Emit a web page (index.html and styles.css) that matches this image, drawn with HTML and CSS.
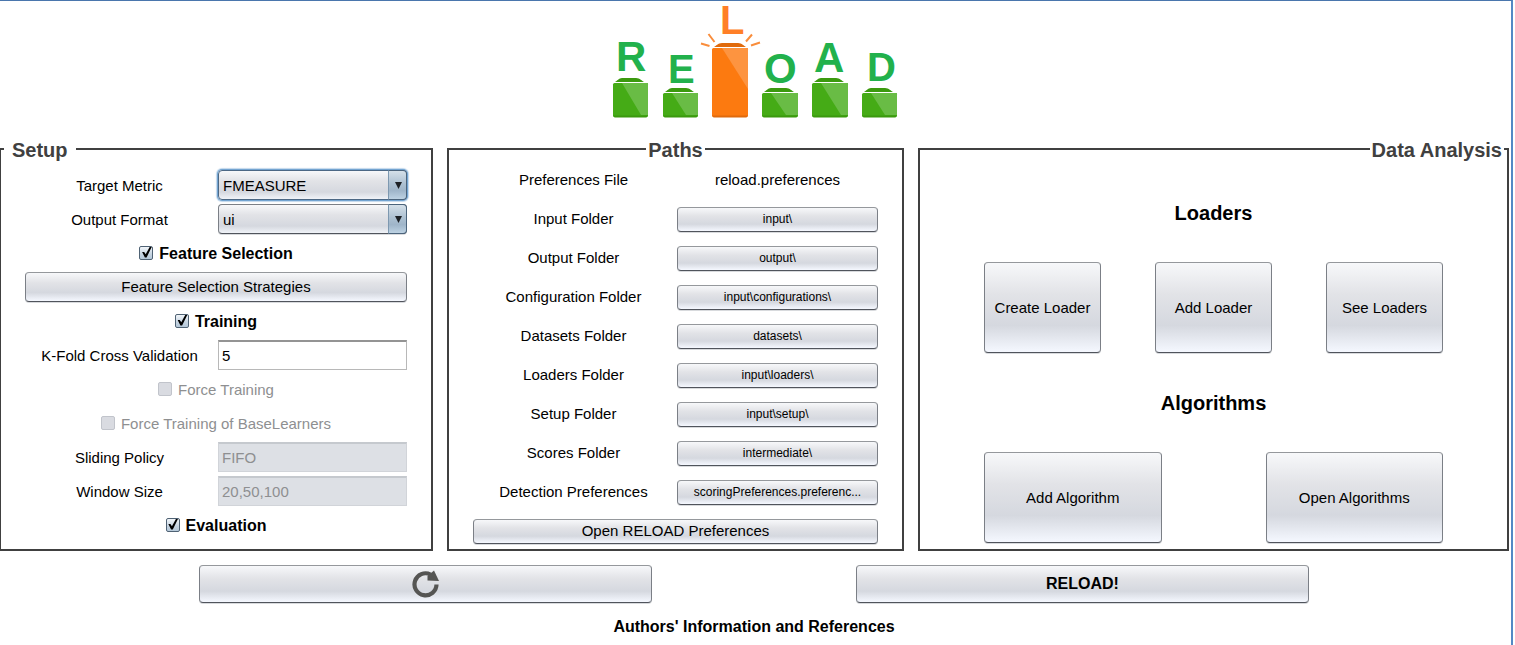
FILE: index.html
```html
<!DOCTYPE html>
<html lang="en">
<head>
<meta charset="utf-8">
<title>RELOAD</title>
<link rel="stylesheet" href="styles.css">
</head>
<body>
<div class="window">
  <header class="header">
    <svg class="logo" viewBox="0 0 290 120" role="img" aria-label="RELOAD">
      <g class="logo-letters">
        <text class="tall" x="6" y="69">R</text>
        <text x="58" y="81">E</text>
        <text class="accent" x="110" y="32">L</text>
        <text class="tall" x="154" y="81">O</text>
        <text class="tall" x="204" y="70">A</text>
        <text x="257" y="79">D</text>
      </g>
      <g class="rays">
        <path d="M91 41.500l8.500 2.500M98.500 32l6 8M136 39.500l6-7M141 43.500l9-3"/>
      </g>
      <g>
        <path fill="#3b990e" d="M5 80c2-1 4-4 7-4h14c4 0 6 3 8 4z"/>
        <rect fill="#45ab16" x="3" y="81" width="35" height="34" rx="1.500"/>
        <path fill="#69bc45" d="M12 81h26v32l-7 0z"/>
        <path fill="#3b990e" d="M3 113.500h35l-1.500 2h-32z"/>
      </g>
      <g>
        <path fill="#3b990e" d="M55 90c2-1 4-4 7-4h14c4 0 6 3 8 4z"/>
        <rect fill="#45ab16" x="53" y="91" width="35" height="24" rx="1.500"/>
        <path fill="#69bc45" d="M62 91h26v22h-12z"/>
        <path fill="#3b990e" d="M53 113.500h35l-1.500 2h-32z"/>
      </g>
      <g>
        <path fill="#e06a0c" d="M104 45c2-1 4-4 8-4h16c4 0 6 3 8 4z"/>
        <rect fill="#fc7a10" x="102" y="46" width="36" height="69" rx="1.500"/>
        <path fill="#fd9440" d="M112 46h26v41z"/>
        <path fill="#e06a0c" d="M102 113.500h36l-1.500 2h-33z"/>
      </g>
      <g>
        <path fill="#3b990e" d="M154 90c2-1 4-4 7-4h15c4 0 6 3 8 4z"/>
        <rect fill="#45ab16" x="152" y="91" width="36" height="24" rx="1.500"/>
        <path fill="#69bc45" d="M161 91h27v22h-12z"/>
        <path fill="#3b990e" d="M152 113.500h36l-1.500 2h-33z"/>
      </g>
      <g>
        <path fill="#3b990e" d="M204 80c2-1 4-4 7-4h15c4 0 6 3 8 4z"/>
        <rect fill="#45ab16" x="202" y="81" width="36" height="34" rx="1.500"/>
        <path fill="#69bc45" d="M211 81h27v32h-7z"/>
        <path fill="#3b990e" d="M202 113.500h36l-1.500 2h-33z"/>
      </g>
      <g>
        <path fill="#3b990e" d="M254 90c2-1 4-4 7-4h14c4 0 6 3 8 4z"/>
        <rect fill="#45ab16" x="252" y="91" width="35" height="24" rx="1.500"/>
        <path fill="#69bc45" d="M261 91h26v22h-12z"/>
        <path fill="#3b990e" d="M252 113.500h35l-1.500 2h-32z"/>
      </g>
    </svg>
  </header>

  <main class="panels">
    <fieldset class="panel panel-setup">
      <legend>Setup</legend>
      <div class="setup-grid">
        <label for="metric">Target Metric</label>
        <span class="combo combo-active"><select id="metric"><option>FMEASURE</option></select></span>
        <label for="format">Output Format</label>
        <span class="combo"><select id="format"><option>ui</option></select></span>
        <label class="check strong wide"><input type="checkbox" checked>Feature Selection</label>
        <button class="btn wide" type="button">Feature Selection Strategies</button>
        <label class="check strong wide"><input type="checkbox" checked>Training</label>
        <label for="kfold">K-Fold Cross Validation</label>
        <input class="field" id="kfold" type="text" value="5">
        <label class="check off wide"><input type="checkbox" disabled>Force Training</label>
        <label class="check off wide"><input type="checkbox" disabled>Force Training of BaseLearners</label>
        <label for="policy">Sliding Policy</label>
        <input class="field" id="policy" type="text" value="FIFO" disabled>
        <label for="window-size">Window Size</label>
        <input class="field" id="window-size" type="text" value="20,50,100" disabled>
        <label class="check strong wide"><input type="checkbox" checked>Evaluation</label>
      </div>
    </fieldset>

    <fieldset class="panel panel-paths">
      <legend>Paths</legend>
      <div class="paths-grid">
        <span>Preferences File</span><span>reload.preferences</span>
        <label for="p-input">Input Folder</label><button class="btn small" id="p-input" type="button">input\</button>
        <label for="p-output">Output Folder</label><button class="btn small" id="p-output" type="button">output\</button>
        <label for="p-conf">Configuration Folder</label><button class="btn small" id="p-conf" type="button">input\configurations\</button>
        <label for="p-data">Datasets Folder</label><button class="btn small" id="p-data" type="button">datasets\</button>
        <label for="p-load">Loaders Folder</label><button class="btn small" id="p-load" type="button">input\loaders\</button>
        <label for="p-setup">Setup Folder</label><button class="btn small" id="p-setup" type="button">input\setup\</button>
        <label for="p-scores">Scores Folder</label><button class="btn small" id="p-scores" type="button">intermediate\</button>
        <label for="p-det">Detection Preferences</label><button class="btn small" id="p-det" type="button">scoringPreferences.preferenc...</button>
        <button class="btn wide" type="button">Open RELOAD Preferences</button>
      </div>
    </fieldset>

    <fieldset class="panel panel-data">
      <legend>Data Analysis</legend>
      <div class="data-grid">
        <h2>Loaders</h2>
        <div class="tiles loaders">
          <button class="btn" type="button">Create Loader</button>
          <button class="btn" type="button">Add Loader</button>
          <button class="btn" type="button">See Loaders</button>
        </div>
        <h2>Algorithms</h2>
        <div class="tiles algorithms">
          <button class="btn" type="button">Add Algorithm</button>
          <button class="btn" type="button">Open Algorithms</button>
        </div>
      </div>
    </fieldset>
  </main>

  <div class="actions">
    <button class="btn" type="button" aria-label="Refresh">
      <svg class="refresh" viewBox="0 0 28 28" aria-hidden="true">
        <path d="M24.500 14.500A11 11 0 1 1 18.500 4.500" fill="none" stroke="#555553" stroke-width="4.200"/>
        <path d="M22 0.500 27 11 15.500 10.500 15.500 6z" fill="#555553"/>
      </svg>
    </button>
    <button class="btn run" type="button">RELOAD!</button>
  </div>

  <footer class="footer">Authors' Information and References</footer>
</div>
</body>
</html>
```

FILE: styles.css
```css
* {
  box-sizing: border-box;
}

body {
  margin: 0 2px 0 0;
  background: #fff;
  color: #000;
  font: 15px/20px "Liberation Sans", Arial, sans-serif;
}

button,
input,
select {
  font: inherit;
  color: inherit;
  margin: 0;
}

.window {
  min-height: 100vh;
  border-top: 1px solid #4a76ad;
  border-right: 2px solid #5488c4;
}

/* Logo */
.header {
  display: flex;
  justify-content: center;
  padding: 1px 2px 15px 0;
}

.logo {
  width: 290px;
  height: 120px;
  overflow: visible;
}

.logo-letters {
  font-size: 40px;
  font-weight: bold;
  fill: #22b14c;
}

.logo-letters .tall {
  font-size: 42px;
}

.logo-letters .accent {
  fill: #ff7f27;
}

.rays {
  fill: none;
  stroke: #f98d3c;
  stroke-width: 2;
}

/* Panels */
.panels {
  display: grid;
  grid-template-columns: 433fr 457fr 591fr;
  gap: 14px;
  padding-right: 2px;
}

.panel {
  min-width: 0;
  margin: 0;
  padding: 0;
  border: 2px solid #404040;
}

.panel legend {
  padding: 2px 2px 0;
  color: #404040;
  font-size: 20px;
  font-weight: bold;
  line-height: 22px;
}

.panel-setup {
  border-left-width: 1px;
}

.panel-setup legend {
  margin-left: 3px;
  padding: 2px 8px 0;
}

.panel-paths legend {
  margin: 0 auto;
}

.panel-data legend {
  margin-left: auto;
  margin-right: 3px;
}

.setup-grid {
  display: grid;
  grid-template-columns: 1fr 1fr;
  grid-auto-rows: 30px;
  gap: 4px;
  padding: 9px 24px 8px;
  align-items: center;
  text-align: center;
}

.setup-grid label {
  padding-top: 2px;
}

.paths-grid {
  display: grid;
  grid-template-columns: 1fr 1fr;
  grid-auto-rows: 26px;
  gap: 13px 3px;
  padding: 6px 24px 5px;
  align-items: center;
  text-align: center;
}

.data-grid {
  display: grid;
  grid-auto-rows: 91px;
  gap: 4px;
  padding: 6px 64px 5px;
}

.data-grid h2 {
  margin: 0;
  align-self: center;
  text-align: center;
  font-size: 20px;
  line-height: 24px;
}

.tiles {
  display: grid;
}

.loaders {
  grid-template-columns: repeat(3, 1fr);
  gap: 54px;
}

.algorithms {
  grid-template-columns: repeat(2, 1fr);
  gap: 104px;
}

.wide {
  grid-column: 1 / -1;
}

/* Controls */
.btn {
  width: 100%;
  height: 100%;
  padding: 0 8px;
  border: 1px solid #7b7f86;
  border-top-color: #95989c;
  border-bottom-color: #50545c;
  border-radius: 4px;
  background: linear-gradient(#f7f8fa, #e2e3e7 35%, #d5d8df 70%, #f5f8ff);
  box-shadow: 0 1px 0 #d8dadd;
  white-space: nowrap;
  overflow: hidden;
}

.paths-grid .btn {
  height: 25px;
}

.small {
  font-size: 12px;
}

.combo {
  position: relative;
  display: block;
  height: 30px;
}

.combo select {
  appearance: none;
  width: 100%;
  height: 100%;
  padding: 2px 24px 0 4px;
  border: 1px solid #7b7f86;
  border-bottom-color: #50545c;
  border-radius: 4px;
  background: linear-gradient(#f7f8fa, #e2e3e7 35%, #d5d8df 75%, #f0f3f8);
  box-shadow: 0 1px 0 #d8dadd;
}

.combo-active select {
  border-color: #4c6885;
  box-shadow: 0 0 0 1px #73a4d1, 0 0 1px 2px #c2d8ec;
}

.combo::before {
  content: "";
  position: absolute;
  inset: 0 0 0 auto;
  width: 17px;
  border: 1px solid #4b647c;
  border-left-color: #7d98b0;
  border-radius: 0 4px 4px 0;
  background: linear-gradient(#d5e0e9, #adc1d2 45%, #9fb5c9 70%, #bdd2e3);
  pointer-events: none;
}

.combo::after {
  content: "";
  position: absolute;
  right: 5px;
  top: 12px;
  width: 7px;
  height: 7px;
  background: #1d2126;
  clip-path: polygon(0 0, 100% 0, 50% 100%);
  pointer-events: none;
}

.field {
  width: 100%;
  height: 30px;
  padding: 0 3px;
  border: 1px solid #b8b8b8;
  border-top: 2px solid #949494;
  border-radius: 0;
  background: #fff;
}

.field:disabled {
  border-color: #d1d4d9;
  border-top-color: #c5c9ce;
  background: #dde0e5;
  color: #8e8f91;
}

.check {
  display: flex;
  align-items: center;
  justify-content: center;
  gap: 6px;
}

.check input {
  appearance: none;
  flex: none;
  width: 14px;
  height: 14px;
  margin-bottom: 3px;
  border: 1px solid #4f6274;
  border-radius: 2px;
  background: linear-gradient(#f2f6fa, #c5d3e0 60%, #b5c8d9);
}

.check input:checked::before {
  content: "";
  display: block;
  width: 12px;
  height: 12px;
  background: #000;
  clip-path: polygon(15% 45%, 32% 45%, 45% 65%, 78% 5%, 95% 5%, 52% 92%, 38% 92%);
}

.check input:disabled {
  border-color: #c1c4cb;
  background: #d9dbe1;
}

.strong {
  font-size: 16px;
  font-weight: bold;
}

.off {
  color: #8e8f91;
}

/* Bottom */
.actions {
  display: grid;
  grid-template-columns: 1fr 1fr;
  grid-auto-rows: 38px;
  gap: 204px;
  padding: 14px 202px 0 199px;
}

.refresh {
  display: block;
  width: 28px;
  height: 28px;
  margin: 0 auto;
}

.run {
  font-size: 16px;
  font-weight: bold;
}

.footer {
  padding: 14px 3px 0 0;
  text-align: center;
  font-size: 16px;
  font-weight: bold;
}
```
